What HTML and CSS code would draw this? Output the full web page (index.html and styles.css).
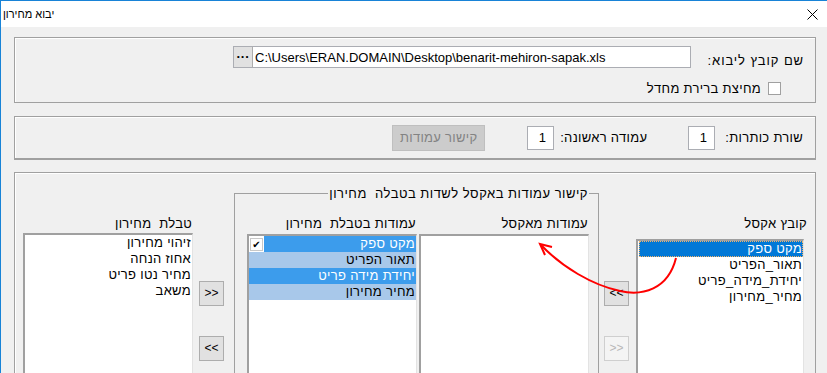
FILE: index.html
```html
<!DOCTYPE html>
<html lang="he" dir="rtl">
<head>
  <meta charset="utf-8">
  <title>יבוא מחירון</title>
  <link rel="stylesheet" href="styles.css">
</head>
<body>
  <div class="window">
    <div class="titlebar">
      <span class="title">יבוא מחירון</span>
      <svg class="close" width="11" height="11" viewBox="0 0 11 11">
        <path d="M0.5 0.5 L10.5 10.5 M10.5 0.5 L0.5 10.5" stroke="#000" stroke-width="1" fill="none"/>
      </svg>
    </div>

    <div class="client">
      <div class="group file-box">
        <div class="file-row">
          <span class="file-lbl">שם קובץ ליבוא:</span>
          <div class="path-field">
            <span class="dots">···</span>
            <span class="path">C:\Users\ERAN.DOMAIN\Desktop\benarit-mehiron-sapak.xls</span>
          </div>
        </div>
        <div class="check-row">
          <span class="chk"></span>
          <span>מחיצת ברירת מחדל</span>
        </div>
      </div>

      <div class="group panel-box">
        <span class="lbl">שורת כותרות:</span>
        <span class="num">1</span>
        <span class="lbl lbl-first">עמודה ראשונה:</span>
        <span class="num">1</span>
        <span class="btn btn-link disabled">קישור עמודות</span>
      </div>

      <div class="group map-box">
        <div class="col col-excel">
          <div class="col-lbl">קובץ אקסל</div>
          <div class="list list-excel">
            <div class="item selected">מקט ספק</div>
            <div class="item">תאור_הפריט</div>
            <div class="item">יחידת_מידה_פריט</div>
            <div class="item">מחיר_מחירון</div>
          </div>
        </div>

        <div class="arrows arrows-right">
          <span class="btn sq">&lt;&lt;</span>
          <span class="btn sq disabled">&gt;&gt;</span>
        </div>

        <fieldset class="link-group">
          <legend>קישור עמודות באקסל לשדות בטבלה  מחירון</legend>
          <div class="link-cols">
            <div class="col col-mid">
              <div class="col-lbl">עמודות מאקסל</div>
              <div class="list"></div>
            </div>
            <div class="col col-mid">
              <div class="col-lbl">עמודות בטבלת  מחירון</div>
              <div class="list list-fields">
                <div class="item row-first"><span class="row-text">מקט ספק</span><span class="row-cell"><span class="row-check">✔</span></span></div>
                <div class="item row-light">תאור הפריט</div>
                <div class="item row-dark">יחידת מידה פריט</div>
                <div class="item row-light">מחיר מחירון</div>
              </div>
            </div>
          </div>
        </fieldset>

        <div class="arrows arrows-left">
          <span class="btn sq">&gt;&gt;</span>
          <span class="btn sq">&lt;&lt;</span>
        </div>

        <div class="col col-table">
          <div class="col-lbl">טבלת  מחירון</div>
          <div class="list list-table">
            <div class="item">זיהוי מחירון</div>
            <div class="item">אחוז הנחה</div>
            <div class="item">מחיר נטו פריט</div>
            <div class="item">משאב</div>
          </div>
        </div>
      </div>
    </div>

    <svg class="red-arrow" width="827" height="373" viewBox="0 0 827 373">
      <path d="M676 258 C668 290 642 296 620 291 C592 285 562 267 541 245" stroke="#f00" stroke-width="2" fill="none"/>
      <path d="M552 247 L540 244 L545 255" stroke="#f00" stroke-width="2" fill="none"/>
    </svg>
  </div>
</body>
</html>
```

FILE: styles.css
```css
* {
  box-sizing: border-box;
}

body {
  margin: 0;
  background: #fff;
  font-family: "Liberation Sans", "DejaVu Sans", sans-serif;
  font-size: 13px;
  letter-spacing: 0.3px;
  color: #000;
  overflow: hidden;
}

.window {
  position: relative;
  width: 827px;
  height: 373px;
  border-top: 1px solid #1883d7;
  border-left: 1px solid #1883d7;
  background: #f0f0f0;
  overflow: hidden;
}

.titlebar {
  direction: ltr;
  height: 26px;
  background: #fff;
  display: flex;
  align-items: center;
  justify-content: space-between;
  padding: 0 9px 0 2px;
}

.title {
  font-size: 11px;
  letter-spacing: 0;
}

.client {
  padding: 10px 11px 0 13px;
}

.group {
  border: 1px solid #a0a0a0;
  box-shadow: inset 1px 1px 0 #fff;
}

/* file box */
.file-box {
  height: 66px;
  padding: 8px 11px 0 0;
}

.file-row {
  display: flex;
  align-items: flex-end;
}

.file-lbl {
  width: 100px;
  margin-left: 13px;
  line-height: 15px;
  letter-spacing: 0.9px;
  white-space: nowrap;
}

.path-field {
  direction: ltr;
  width: 458px;
  height: 22px;
  background: #fff;
  border: 1px solid #abadb3;
  display: flex;
  align-items: center;
  letter-spacing: 0;
}

.dots {
  width: 19px;
  height: 20px;
  background: #e1e1e1;
  border-right: 1px solid #adadad;
  font-weight: bold;
  text-align: center;
  line-height: 20px;
}

.path {
  padding-left: 2px;
}

.check-row {
  display: flex;
  align-items: center;
  margin-top: 13px;
  padding-right: 23px;
}

.chk {
  width: 13px;
  height: 13px;
  border: 1px solid #a0a0a0;
  background: #fff;
  margin-left: 7px;
}

/* header row box */
.panel-box {
  margin-top: 13px;
  height: 44px;
  border-bottom-width: 2px;
  display: flex;
  align-items: center;
  padding-right: 12px;
}

.lbl {
  white-space: nowrap;
}

.num {
  width: 27px;
  height: 24px;
  background: #fff;
  border: 1px solid #abadb3;
  line-height: 22px;
  padding-right: 7px;
  margin-right: 10px;
}

.lbl-first {
  margin-right: 41px;
}

.num + .btn-link {
  margin-right: 42px;
}

.lbl-first + .num {
  margin-right: 6px;
}

.btn {
  background: #e1e1e1;
  border: 1px solid #adadad;
  text-align: center;
}

.btn-link {
  width: 93px;
  height: 26px;
  line-height: 24px;
}

.btn-link.disabled {
  background: #cccccc;
  border-color: #bfbfbf;
  color: #838383;
}

/* mapping box */
.map-box {
  margin-top: 12px;
  height: 230px;
  display: flex;
  align-items: flex-start;
  padding: 0 7px 0 8px;
}

.col-lbl {
  line-height: 15px;
  padding-right: 1px;
  white-space: pre;
}

.list {
  background: #fff;
  border-style: solid;
  border-width: 2px 1px 1px 2px;
  border-color: #a0a0a0 #e3e3e3 #e3e3e3 #a0a0a0;
  height: 160px;
}

.item {
  height: 16px;
  line-height: 16px;
  padding-right: 1px;
  white-space: nowrap;
}

.col-excel {
  width: 172px;
  margin-top: 43px;
}

.list-excel {
  width: 168px;
  margin-top: 8px;
  margin-right: 4px;
  padding-left: 1px;
}

.item.selected {
  background: #0078d7;
  color: #fff;
  outline: 1px dotted #f2b36a;
  outline-offset: -1px;
}

.arrows {
  width: 25px;
  margin-top: 108px;
  display: flex;
  flex-direction: column;
}

.arrows-right {
  margin-right: 7px;
}

.arrows-left {
  margin-right: 10px;
}

.btn.sq {
  direction: ltr;
  width: 25px;
  height: 25px;
  line-height: 23px;
  font-size: 12px;
  letter-spacing: 0;
}

.btn.sq + .btn.sq {
  margin-top: 30px;
}

.btn.sq.disabled {
  background: #f4f4f4;
  border-color: #cfcfcf;
  color: #b8b8b8;
}

.link-group {
  width: 365px;
  margin: 13px 5px 0 0;
  padding: 15px 9px 0 12px;
  border: 1px solid #a0a0a0;
  min-width: 0;
  height: 200px;
}

.link-group legend {
  padding: 0 1px;
  line-height: 15px;
  letter-spacing: 0.5px;
  white-space: pre;
}

.link-cols {
  display: flex;
  gap: 2px;
}

.col-mid {
  width: 170px;
}

.col-mid .list {
  margin-top: 3px;
}

.row-first {
  display: flex;
  padding-right: 0;
}

.row-text {
  flex: 1;
  background: #3c9cec;
  color: #fff;
  padding-right: 1px;
}

.row-cell {
  width: 15px;
  display: flex;
  align-items: center;
  justify-content: center;
}

.row-check {
  width: 13px;
  height: 13px;
  background: #fff;
  border: 1px solid #c8c8c8;
  font-size: 10px;
  line-height: 11px;
  text-align: center;
  letter-spacing: 0;
}

.row-light {
  background: #a8c8ea;
}

.row-dark {
  background: #3c9cec;
  color: #fff;
}

.col-table {
  width: 170px;
  margin: 43px 6px 0 0;
}

.list-table {
  margin-top: 2px;
}

.red-arrow {
  position: absolute;
  top: -1px;
  left: -1px;
  pointer-events: none;
}
```
